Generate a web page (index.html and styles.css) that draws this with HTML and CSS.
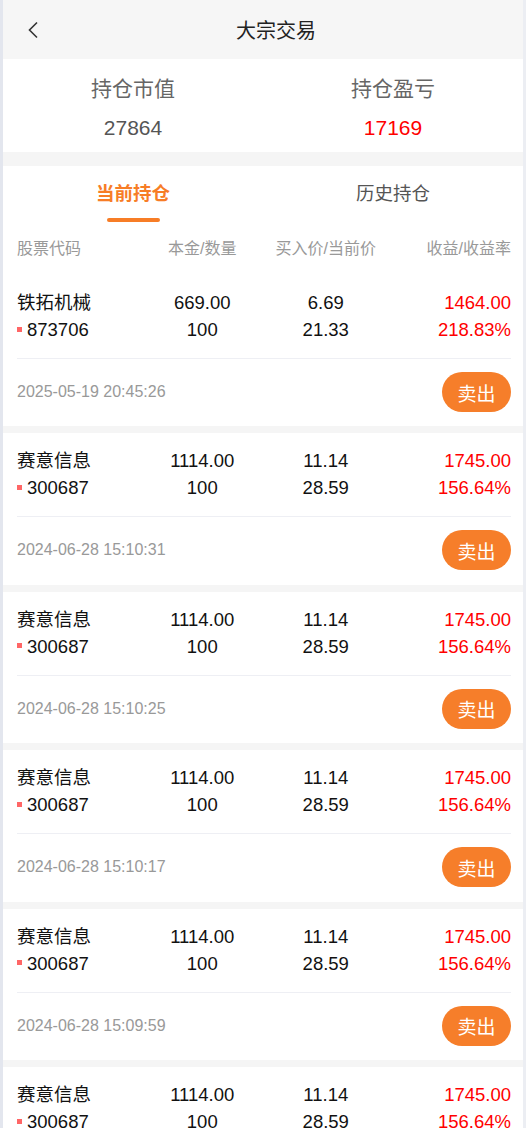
FILE: index.html
```html
<!DOCTYPE html>
<html lang="zh-CN">
<head>
<meta charset="UTF-8" />
<meta name="viewport" content="width=device-width, initial-scale=1" />
<title>大宗交易</title>
<link rel="stylesheet" href="styles.css">
</head>
<body>
<div class="page">
    <div class="topbar">
        <div class="back">
            <svg width="12" height="18" viewBox="0 0 12 18"><path d="M10 1.5 L2.5 9 L10 16.5" fill="none" stroke="#333" stroke-width="1.6"/></svg>
        </div>
        <div class="title">大宗交易</div>
        <div></div>
    </div>

    <div class="summary">
        <div class="sumCol">
            <div class="sumLabel">持仓市值</div>
            <div class="sumValue">27864</div>
        </div>
        <div class="sumCol">
            <div class="sumLabel">持仓盈亏</div>
            <div class="sumValue red">17169</div>
        </div>
    </div>

    <div class="tabsBox">
        <div class="tabs">
            <div class="tab active">当前持仓<span class="bar"></span></div>
            <div class="tab">历史持仓</div>
        </div>
        <div class="row colHead">
            <div>股票代码</div>
            <div>本金/数量</div>
            <div>买入价/当前价</div>
            <div>收益/收益率</div>
        </div>
    </div>

    <div class="item first">
        <div class="row">
            <div>铁拓机械</div><div>669.00</div><div>6.69</div><div class="red">1464.00</div>
        </div>
        <div class="row">
            <div><span class="dot"></span>873706</div><div>100</div><div>21.33</div><div class="red">218.83%</div>
        </div>
        <div class="line"></div>
        <div class="foot">
            <span class="time">2025-05-19 20:45:26</span>
            <div class="btnSell">卖出</div>
        </div>
    </div>

    <div class="item">
        <div class="row">
            <div>赛意信息</div><div>1114.00</div><div>11.14</div><div class="red">1745.00</div>
        </div>
        <div class="row">
            <div><span class="dot"></span>300687</div><div>100</div><div>28.59</div><div class="red">156.64%</div>
        </div>
        <div class="line"></div>
        <div class="foot">
            <span class="time">2024-06-28 15:10:31</span>
            <div class="btnSell">卖出</div>
        </div>
    </div>

    <div class="item">
        <div class="row">
            <div>赛意信息</div><div>1114.00</div><div>11.14</div><div class="red">1745.00</div>
        </div>
        <div class="row">
            <div><span class="dot"></span>300687</div><div>100</div><div>28.59</div><div class="red">156.64%</div>
        </div>
        <div class="line"></div>
        <div class="foot">
            <span class="time">2024-06-28 15:10:25</span>
            <div class="btnSell">卖出</div>
        </div>
    </div>

    <div class="item">
        <div class="row">
            <div>赛意信息</div><div>1114.00</div><div>11.14</div><div class="red">1745.00</div>
        </div>
        <div class="row">
            <div><span class="dot"></span>300687</div><div>100</div><div>28.59</div><div class="red">156.64%</div>
        </div>
        <div class="line"></div>
        <div class="foot">
            <span class="time">2024-06-28 15:10:17</span>
            <div class="btnSell">卖出</div>
        </div>
    </div>

    <div class="item">
        <div class="row">
            <div>赛意信息</div><div>1114.00</div><div>11.14</div><div class="red">1745.00</div>
        </div>
        <div class="row">
            <div><span class="dot"></span>300687</div><div>100</div><div>28.59</div><div class="red">156.64%</div>
        </div>
        <div class="line"></div>
        <div class="foot">
            <span class="time">2024-06-28 15:09:59</span>
            <div class="btnSell">卖出</div>
        </div>
    </div>

    <div class="item">
        <div class="row">
            <div>赛意信息</div><div>1114.00</div><div>11.14</div><div class="red">1745.00</div>
        </div>
        <div class="row">
            <div><span class="dot"></span>300687</div><div>100</div><div>28.59</div><div class="red">156.64%</div>
        </div>
        <div class="line"></div>
        <div class="foot">
            <span class="time">2024-06-28 15:09:41</span>
            <div class="btnSell">卖出</div>
        </div>
    </div>
</div>
</body>
</html>
```

FILE: styles.css
```css
body{
    margin: 0;
    padding: 0;
    background-color: #f5f5f5;
    font-family: "Liberation Sans", "Noto Sans CJK SC", sans-serif;
    color: #111;
}
.page{
    border-left: 3px solid #e3e6ee;
    border-right: 3px solid #eceef3;
    min-height: 100vh;
    overflow: hidden;
}
.topbar{
    height: 59px;
    background-color: #f6f6f6;
    display: grid;
    grid-template-columns: 80px 1fr 54px;
    align-items: center;
}
.back{
    padding-left: 24px;
    display: flex;
    align-items: center;
}
.title{
    text-align: center;
    font-size: 20px;
    color: #222;
}
.summary{
    background-color: white;
    display: flex;
    padding: 16px 0 10px;
    margin-bottom: 14px;
}
.sumCol{
    flex: 1;
    text-align: center;
}
.sumLabel{
    font-size: 21px;
    line-height: 28px;
    color: #666;
}
.sumValue{
    font-size: 21px;
    line-height: 28px;
    margin-top: 11px;
    color: #555;
}
.red{ color: #ff0000 !important; }

.tabsBox{
    background-color: white;
    padding: 15px 0 15px;
}
.tabs{
    display: flex;
}
.tab{
    flex: 1;
    text-align: center;
    font-size: 18.5px;
    line-height: 26px;
    color: #555;
    padding-bottom: 15px;
    position: relative;
}
.tab.active{
    color: #f77d26;
    font-weight: bold;
}
.tab .bar{
    position: absolute;
    left: 50%;
    bottom: 0;
    width: 53px;
    height: 4px;
    margin-left: -26px;
    border-radius: 2px;
    background-color: #f77d26;
}
.row{
    display: grid;
    grid-template-columns: 1fr 1fr 1fr 1fr;
    font-size: 18.5px;
    line-height: 27px;
}
.row > div:nth-child(2), .row > div:nth-child(3){ text-align: center; }
.row > div:nth-child(4){ text-align: right; }
.colHead{
    margin-top: 16px;
    padding: 0 12px 0 14px;
    font-size: 16px;
    line-height: 22px;
    color: #999;
}
.item{
    background-color: white;
    padding: 14px 12px 14.4px 14px;
    margin-bottom: 7px;
}
.dot{
    display: inline-block;
    width: 5px;
    height: 5px;
    background-color: #f66;
    margin-right: 5px;
    vertical-align: middle;
    position: relative;
    top: -2px;
}
.line{
    height: 1px;
    background-color: #eeeff4;
    margin-top: 15px;
}
.foot{
    margin-top: 13px;
    display: flex;
    justify-content: space-between;
    align-items: center;
}
.time{
    font-size: 16px;
    color: #999;
}
.btnSell{
    width: 69px;
    height: 40px;
    border-radius: 20px;
    background-color: #f67e2a;
    color: white;
    font-size: 19px;
    display: flex;
    justify-content: center;
    align-items: center;
}
```
